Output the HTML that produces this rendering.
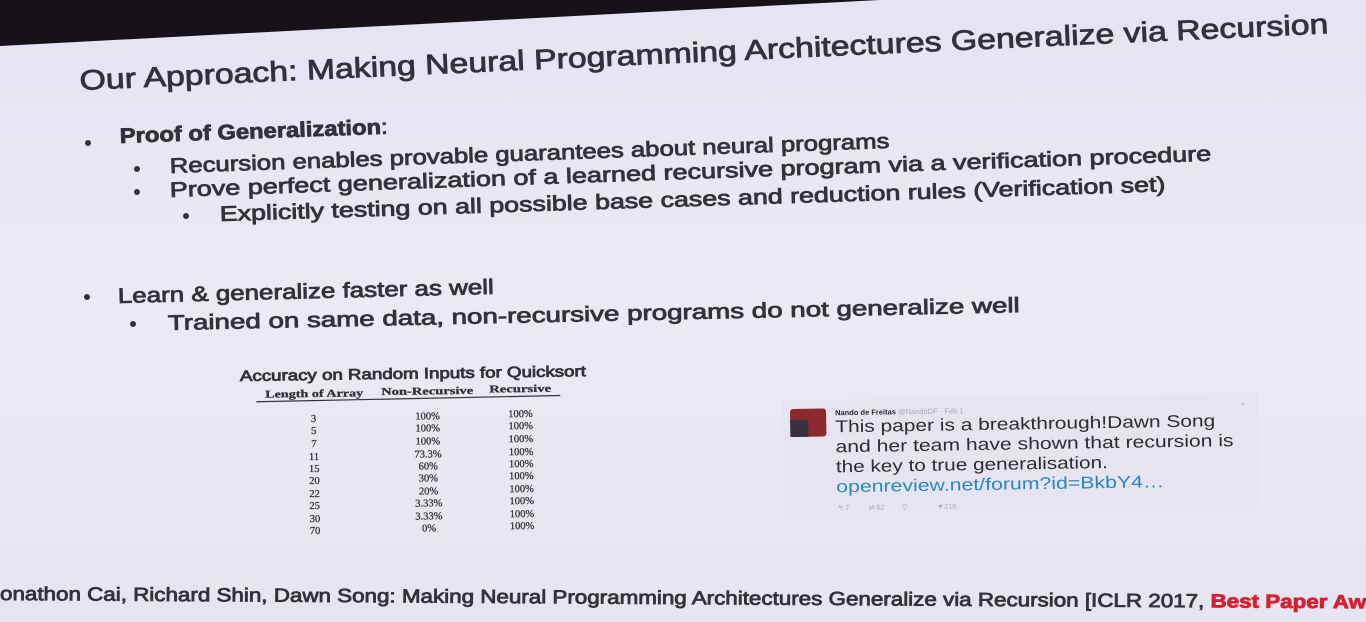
<!DOCTYPE html>
<html><head><meta charset="utf-8"><style>
html,body{margin:0;padding:0;width:1366px;height:622px;overflow:hidden;background:#e9e7f4}
svg{display:block}
.t{font-family:"Liberation Sans",sans-serif;fill:#34313f;stroke:#34313f;stroke-width:0.8}
.s{font-family:"Liberation Serif",serif;fill:#34313f;stroke:#34313f;stroke-width:0.3;font-size:10.5px}
.tw{font-family:"Liberation Sans",sans-serif;fill:#2c2b33;font-size:17px}
</style></head><body>
<svg width="1366" height="622" viewBox="0 0 1366 622">
<defs><linearGradient id="bg" x1="0" y1="0" x2="0" y2="1">
<stop offset="0" stop-color="#e6e3f2"/><stop offset="0.5" stop-color="#ece9f6"/><stop offset="1" stop-color="#e7e4f1"/></linearGradient></defs>
<rect width="1366" height="622" fill="url(#bg)"/>
<polygon points="0,0 880,0 0,46" fill="#17121a"/>
<text class="t" x="80" y="90" font-size="28" stroke-width="1" textLength="1250" lengthAdjust="spacingAndGlyphs" transform="rotate(-2.6 80 90)">Our Approach: Making Neural Programming Architectures Generalize via Recursion</text>
<g fill="#34313f">
<circle cx="88" cy="143" r="3"/><circle cx="137" cy="169" r="3"/><circle cx="137" cy="192" r="3"/><circle cx="186" cy="216" r="3"/><circle cx="87" cy="297" r="3"/><circle cx="133" cy="324" r="3"/></g>
<text class="t" x="120" y="143" font-size="21" font-weight="bold" stroke-width="0.2" textLength="268" lengthAdjust="spacingAndGlyphs" transform="rotate(-2.0 120 143)">Proof of Generalization<tspan font-weight="normal">:</tspan></text>
<text class="t" x="170" y="173" font-size="21" textLength="720" lengthAdjust="spacingAndGlyphs" transform="rotate(-2.0 170 173)">Recursion enables provable guarantees about neural programs</text>
<text class="t" x="170" y="197" font-size="21" textLength="1042" lengthAdjust="spacingAndGlyphs" transform="rotate(-2.0 170 197)">Prove perfect generalization of a learned recursive program via a verification procedure</text>
<text class="t" x="220" y="221" font-size="21" textLength="946" lengthAdjust="spacingAndGlyphs" transform="rotate(-1.8 220 221)">Explicitly testing on all possible base cases and reduction rules (Verification set)</text>
<text class="t" x="118" y="303" font-size="21" textLength="376" lengthAdjust="spacingAndGlyphs" transform="rotate(-1.4 118 303)">Learn &amp; generalize faster as well</text>
<text class="t" x="168" y="330" font-size="21" textLength="852" lengthAdjust="spacingAndGlyphs" transform="rotate(-1.2 168 330)">Trained on same data, non-recursive programs do not generalize well</text>
<g transform="rotate(-0.8 240 380)">
<text class="t" x="240" y="381" font-size="15" stroke-width="0.4" textLength="346" lengthAdjust="spacingAndGlyphs">Accuracy on Random Inputs for Quicksort</text>
<text class="s" x="265" y="398" font-weight="bold" textLength="98" lengthAdjust="spacingAndGlyphs">Length of Array</text>
<text class="s" x="381" y="397" font-weight="bold" textLength="92" lengthAdjust="spacingAndGlyphs">Non-Recursive</text>
<text class="s" x="489" y="396" font-weight="bold" textLength="62" lengthAdjust="spacingAndGlyphs">Recursive</text>
<line x1="256" y1="402" x2="560" y2="400" stroke="#34313f" stroke-width="1.2"/>
<g class="s" text-anchor="middle">
<text x="313" y="423">3</text><text x="427" y="422">100%</text><text x="520" y="421">100%</text>
<text x="313" y="435">5</text><text x="427" y="434">100%</text><text x="520" y="433">100%</text>
<text x="313" y="448">7</text><text x="427" y="447">100%</text><text x="520" y="446">100%</text>
<text x="313" y="461">11</text><text x="427" y="460">73.3%</text><text x="520" y="459">100%</text>
<text x="313" y="473">15</text><text x="427" y="472">60%</text><text x="520" y="471">100%</text>
<text x="313" y="485">20</text><text x="427" y="484">30%</text><text x="520" y="483">100%</text>
<text x="313" y="498">22</text><text x="427" y="497">20%</text><text x="520" y="496">100%</text>
<text x="313" y="510">25</text><text x="427" y="509">3.33%</text><text x="520" y="508">100%</text>
<text x="313" y="523">30</text><text x="427" y="522">3.33%</text><text x="520" y="521">100%</text>
<text x="313" y="535">70</text><text x="427" y="534">0%</text><text x="520" y="533">100%</text>
</g></g>
<g transform="rotate(-0.9 790 410)">
<rect x="782" y="400" width="476" height="117" fill="#e6e4f0"/>
<rect x="790" y="409" width="36" height="28" rx="3" fill="#8a2a2e"/>
<rect x="790" y="420" width="18" height="17" fill="#3a3040"/>
<text x="835" y="416" font-family="Liberation Sans" font-size="7.5" font-weight="bold" fill="#2c2b33">Nando de Freitas <tspan font-weight="normal" fill="#a9a7b6">@NandoDF · Feb 1</tspan></text>
<text x="1240" y="412" font-size="8" fill="#a9a7b6" font-family="Liberation Sans">⌄</text>
<text class="tw" x="835" y="433" textLength="380" lengthAdjust="spacingAndGlyphs">This paper is a breakthrough!Dawn Song</text>
<text class="tw" x="835" y="453" textLength="398" lengthAdjust="spacingAndGlyphs">and her team have shown that recursion is</text>
<text class="tw" x="835" y="473" textLength="272" lengthAdjust="spacingAndGlyphs">the key to true generalisation.</text>
<text class="tw" x="835" y="493" textLength="328" lengthAdjust="spacingAndGlyphs" style="fill:#2a87c0">openreview.net/forum?id=BkbY4…</text>
<text x="836" y="511" font-family="Liberation Sans" font-size="7" fill="#a9a7b6">↰ 7 &#160;&#160;&#160;&#160;&#160;&#160;&#160;&#160;&#160;⇄ 62 &#160;&#160;&#160;&#160;&#160;&#160;&#160;&#160;▽ &#160;&#160;&#160;&#160;&#160;&#160;&#160;&#160;&#160;&#160;&#160;&#160;&#160;&#160;&#160;♥ 218</text>
</g>
<text class="t" x="0" y="600" font-size="19" stroke-width="0.5" textLength="1366" lengthAdjust="spacingAndGlyphs" transform="rotate(0.35 0 600)">onathon Cai, Richard Shin, Dawn Song: Making Neural Programming Architectures Generalize via Recursion [ICLR 2017, <tspan font-weight="bold" fill="#d42030" stroke="#d42030">Best Paper Aw</tspan></text>
</svg>
</body></html>
